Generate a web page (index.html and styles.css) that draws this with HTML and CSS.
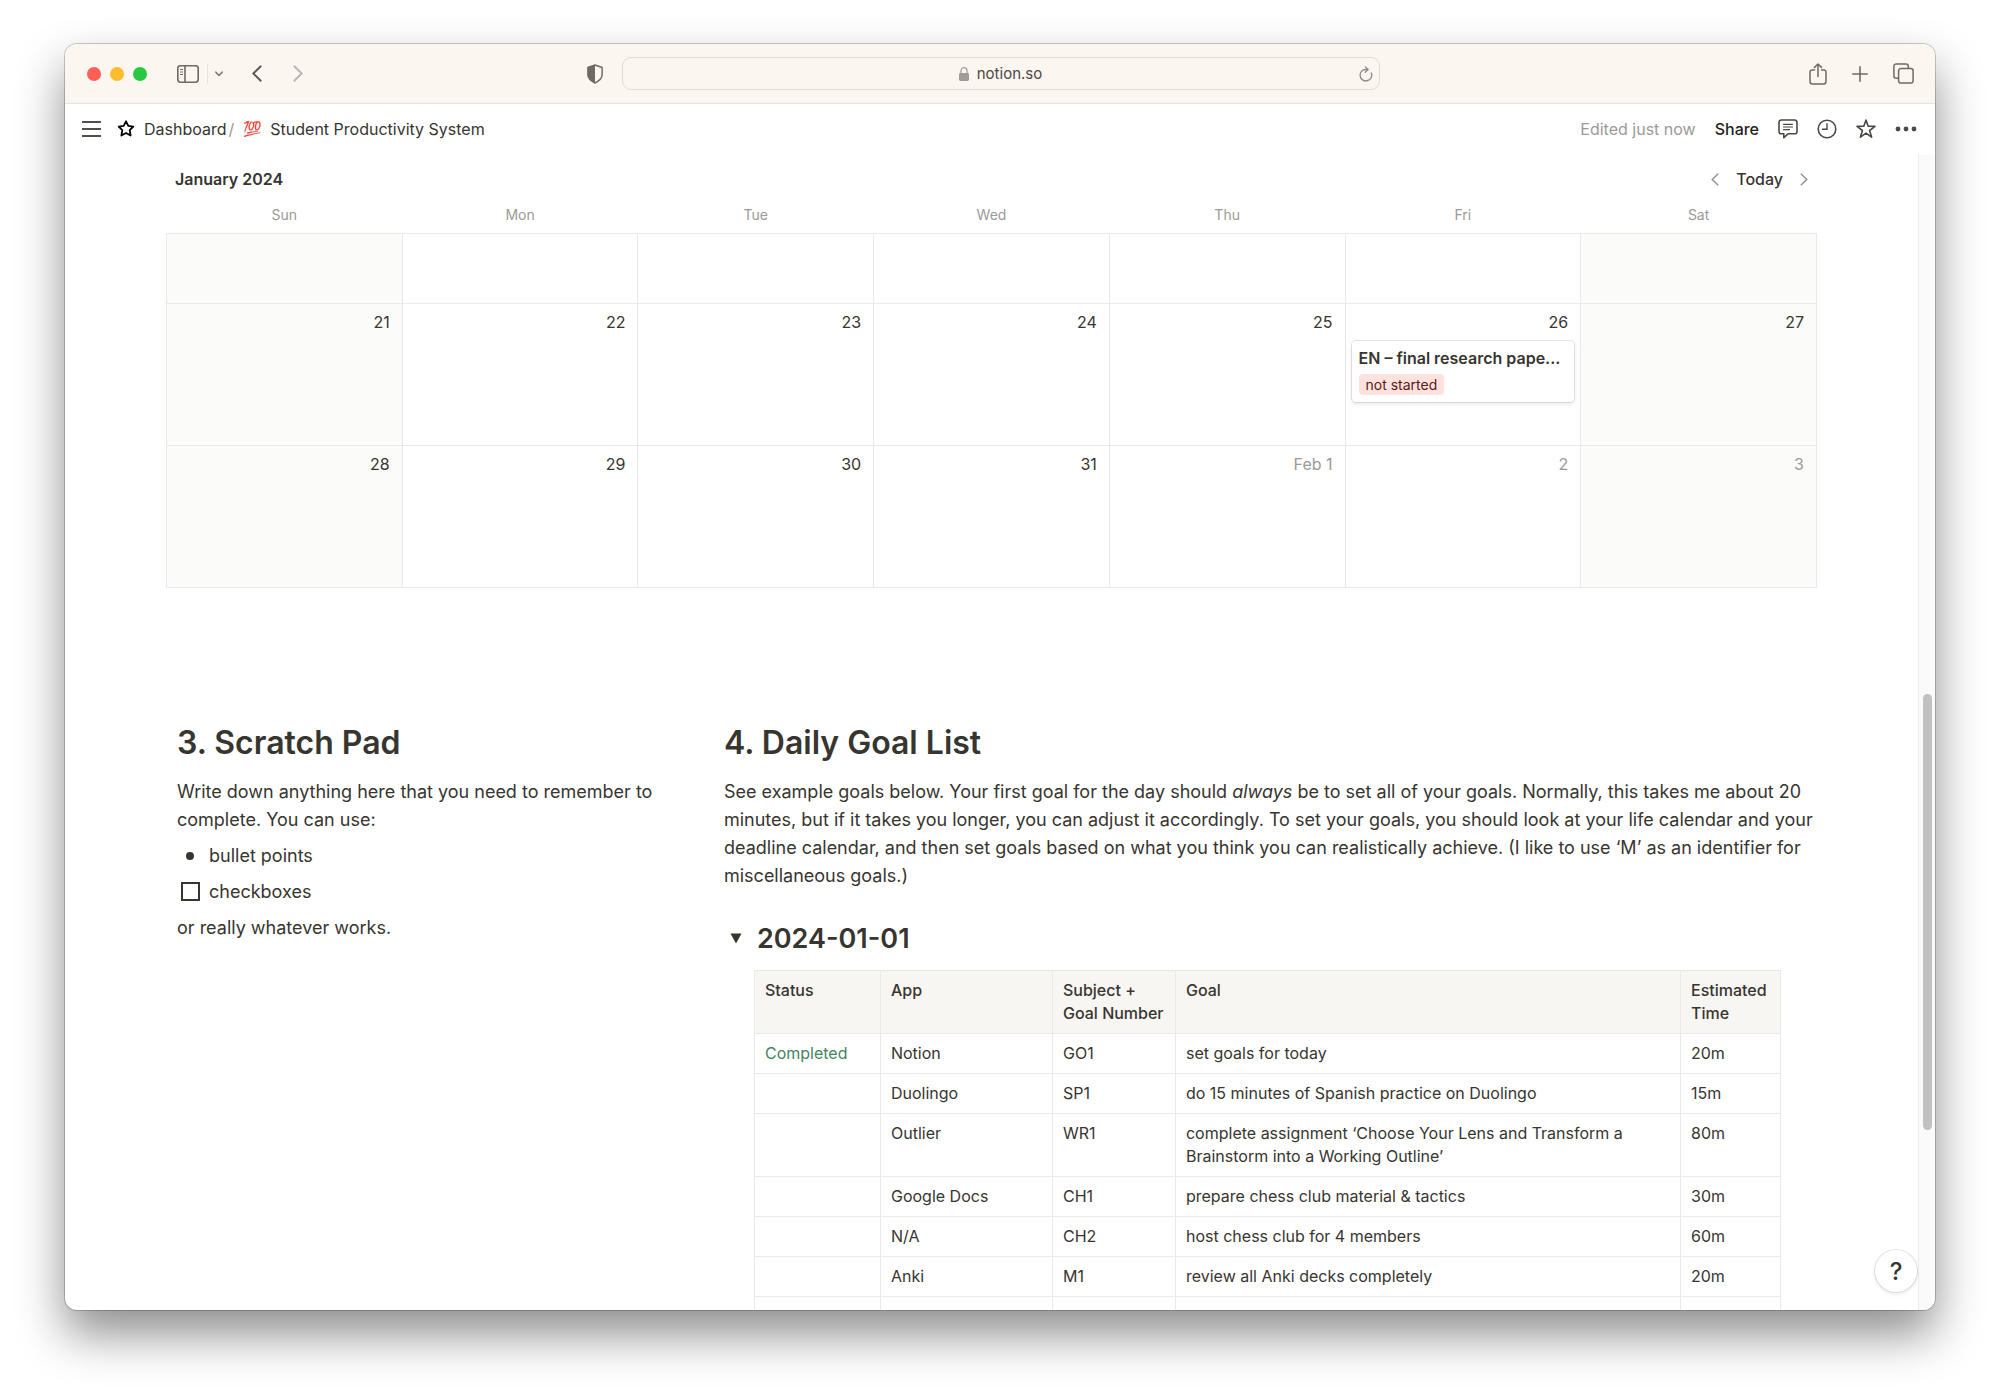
FILE: index.html
```html
<!doctype html>
<html lang="en">
<head>
<meta charset="utf-8">
<meta name="viewport" content="width=device-width,initial-scale=1">
<title>Student Productivity System</title>
<link rel="stylesheet" href="styles.css">
</head>
<body>

<div class="window">

  <!-- browser toolbar -->
  <header class="toolbar">
    <div class="tools-left">
      <div class="lights">
        <span class="light red"></span>
        <span class="light yellow"></span>
        <span class="light green"></span>
      </div>
      <button class="icon-btn sidebar-btn" aria-label="Show sidebar">
        <svg width="22" height="18" viewBox="0 0 22 18" fill="none" stroke="#6f6a64" stroke-width="1.6">
          <rect x="0.8" y="0.8" width="20.4" height="16.4" rx="2.6"/>
          <path d="M8 1v16"/>
          <path d="M3 4.5h3M3 7h3M3 9.5h3" stroke-width="1.1"/>
        </svg>
      </button>
      <span class="divider"></span>
      <button class="icon-btn" aria-label="Tab groups">
        <svg width="8" height="6" viewBox="0 0 8 6" fill="none" stroke="#7d7872" stroke-width="1.6" stroke-linecap="round" stroke-linejoin="round"><path d="M.9 1.200 4 4.500 7.100 1.200"/></svg>
      </button>
      <div class="history">
        <button class="icon-btn" aria-label="Back">
          <svg width="10" height="17" viewBox="0 0 10 17" fill="none" stroke="#5d5954" stroke-width="1.9" stroke-linecap="round" stroke-linejoin="round"><path d="M8.700 1.300 1.300 8.500l7.400 7.200"/></svg>
        </button>
        <button class="icon-btn" aria-label="Forward">
          <svg width="10" height="17" viewBox="0 0 10 17" fill="none" stroke="#b9b4af" stroke-width="1.9" stroke-linecap="round" stroke-linejoin="round"><path d="M1.300 1.300 8.700 8.500l-7.400 7.200"/></svg>
        </button>
      </div>
      <button class="icon-btn shield" aria-label="Privacy report">
        <svg width="16" height="20" viewBox="0 0 16 20">
          <path d="M8 1 15.1 3.5v7.6c0 3.2-2.6 5.6-7.1 7.9C3.500 16.700.9 14.300.9 11.100V3.500z" fill="none" stroke="#6f6a64" stroke-width="1.5" stroke-linejoin="round"/>
          <path d="M8 1v18C3.500 16.700.9 14.300.9 11.100V3.500z" fill="#6f6a64"/>
        </svg>
      </button>
    </div>

    <div class="address">
      <span class="site">
        <svg width="10" height="14" viewBox="0 0 10 14">
          <rect x="0" y="6" width="10" height="8" rx="1.4" fill="#a19c98"/>
          <path d="M2 6.500V3.700a3 3 0 0 1 6 0v2.800" fill="none" stroke="#a19c98" stroke-width="1.2"/>
        </svg>
        notion.so
      </span>
      <button class="icon-btn" aria-label="Reload">
        <svg width="14" height="16" viewBox="0 0 14 16" fill="none" stroke="#8b8681" stroke-width="1.3" stroke-linecap="round" stroke-linejoin="round">
          <path d="M12.400 7.200A5.800 5.800 0 1 1 6.800 3.300L9 3.500"/><path d="M6.300.9 9 3.500 6.300 6.200"/>
        </svg>
      </button>
    </div>

    <div class="tools-right">
      <button class="icon-btn" aria-label="Share page">
        <svg width="18" height="22" viewBox="0 0 18 22" fill="none" stroke="#6f6a64" stroke-width="1.5" stroke-linecap="round" stroke-linejoin="round">
          <path d="M5.500 7H3.200A2.200 2.200 0 0 0 1 9.200v9.600A2.200 2.200 0 0 0 3.200 21h11.600a2.200 2.200 0 0 0 2.200-2.200V9.200A2.200 2.200 0 0 0 14.800 7h-2.300"/>
          <path d="M9 13.500V1.200M5.500 4.400 9 1l3.500 3.400"/>
        </svg>
      </button>
      <button class="icon-btn" aria-label="New tab">
        <svg width="16" height="16" viewBox="0 0 16 16" stroke="#6f6a64" stroke-width="1.6" stroke-linecap="round"><path d="M8 .8v14.400M.8 8h14.400"/></svg>
      </button>
      <button class="icon-btn" aria-label="Tab overview">
        <svg width="21" height="21" viewBox="0 0 21 21" fill="none" stroke="#6f6a64" stroke-width="1.5">
          <path d="M5.600 15.300H3.200A2.300 2.300 0 0 1 .9 13V3.200A2.300 2.300 0 0 1 3.200.9H13a2.300 2.300 0 0 1 2.300 2.300v2.400"/>
          <rect x="5.600" y="5.600" width="14.500" height="14.500" rx="2.300"/>
        </svg>
      </button>
    </div>
  </header>

  <!-- page top bar -->
  <nav class="topbar">
    <button class="icon-btn menu" aria-label="Open menu">
      <svg width="19" height="16" viewBox="0 0 19 16" stroke="#504f4b" stroke-width="1.8"><path d="M0 1h19M0 8h19M0 15h19"/></svg>
    </button>
    <a href="#" class="crumb">
      <svg width="18" height="17" viewBox="0 0 18 17" fill="none" stroke="#000" stroke-width="1.8" stroke-linejoin="round"><path d="M9 1.300 11.300 5.900l5 .7-3.600 3.600.9 5.300L9 13l-4.600 2.500.9-5.300L1.700 6.600l5-.7z"/></svg>
      Dashboard
    </a>
    <span class="slash">/</span>
    <a href="#" class="crumb"><span class="emoji">💯</span>Student Productivity System</a>
    <div class="actions">
      <span class="edited">Edited just now</span>
      <button class="share">Share</button>
      <button class="icon-btn" aria-label="Comments">
        <svg width="20" height="20" viewBox="0 0 20 20" fill="none" stroke="#4a4945" stroke-width="1.600" stroke-linejoin="round" stroke-linecap="round">
          <path d="M3.300 1h13.400A2.300 2.300 0 0 1 19 3.300v9.200a2.300 2.300 0 0 1-2.300 2.300H10L5.800 18.600v-3.800H3.300A2.300 2.300 0 0 1 1 12.500V3.300A2.300 2.300 0 0 1 3.300 1z"/>
          <path d="M5.500 5.300h9M5.500 8h9M5.500 10.700h6" stroke-width="1.200"/>
        </svg>
      </button>
      <button class="icon-btn" aria-label="Updates">
        <svg width="20" height="20" viewBox="0 0 20 20" fill="none" stroke="#4a4945" stroke-width="1.600"><circle cx="10" cy="10" r="8.800"/><path d="M10 4.300v6H5" stroke-width="1.400"/></svg>
      </button>
      <button class="icon-btn" aria-label="Favorite">
        <svg width="20" height="20" viewBox="0 0 20 20" fill="none" stroke="#4a4945" stroke-width="1.600" stroke-linejoin="round"><path d="M10 1 12.200 7.300l6.800.1-5.400 4.100 2 6.700L10 14.200l-5.600 4 2-6.700L1 7.400l6.800-.1z"/></svg>
      </button>
      <button class="icon-btn" aria-label="More">
        <svg width="22" height="6" viewBox="0 0 22 6" fill="#4a4945"><circle cx="3" cy="3" r="2.400"/><circle cx="11" cy="3" r="2.400"/><circle cx="19" cy="3" r="2.400"/></svg>
      </button>
    </div>
  </nav>

  <div class="scroller">
    <main class="page">

      <div class="cal-head">
        <h1>January 2024</h1>
        <div class="cal-nav">
          <button class="icon-btn" aria-label="Previous month">
            <svg width="8" height="13" viewBox="0 0 8 13" fill="none" stroke="#91908c" stroke-width="1.400"><path d="M7.200.8 1.200 6.500l6 5.700"/></svg>
          </button>
          <button class="today">Today</button>
          <button class="icon-btn" aria-label="Next month">
            <svg width="8" height="13" viewBox="0 0 8 13" fill="none" stroke="#91908c" stroke-width="1.400"><path d="M.8.8l6 5.700-6 5.700"/></svg>
          </button>
        </div>
      </div>

      <table class="calendar">
        <thead>
          <tr><th>Sun</th><th>Mon</th><th>Tue</th><th>Wed</th><th>Thu</th><th>Fri</th><th>Sat</th></tr>
        </thead>
        <tbody>
          <tr class="cut"><td></td><td></td><td></td><td></td><td></td><td></td><td></td></tr>
          <tr>
            <td>21</td><td>22</td><td>23</td><td>24</td><td>25</td>
            <td>26
              <a href="#" class="event">
                <strong>EN – final research pape...</strong>
                <span class="tag">not started</span>
              </a>
            </td>
            <td>27</td>
          </tr>
          <tr>
            <td>28</td><td>29</td><td>30</td><td>31</td>
            <td class="next">Feb 1</td><td class="next">2</td><td class="next">3</td>
          </tr>
        </tbody>
      </table>

      <div class="columns">
        <section class="notes">
          <h2>3. Scratch Pad</h2>
          <p>Write down anything here that you need to remember to complete. You can use:</p>
          <ul><li>bullet points</li></ul>
          <label class="todo"><input type="checkbox">checkboxes</label>
          <p>or really whatever works.</p>
        </section>

        <section class="goals">
          <h2>4. Daily Goal List</h2>
          <p>See example goals below. Your first goal for the day should <em>always</em> be to set all of your goals. Normally, this takes me about 20 minutes, but if it takes you longer, you can adjust it accordingly. To set your goals, you should look at your life calendar and your deadline calendar, and then set goals based on what you think you can realistically achieve. (I like to use ‘M’ as an identifier for miscellaneous goals.)</p>

          <h3>
            <button class="icon-btn" aria-label="Collapse 2024-01-01">
              <svg width="12" height="11" viewBox="0 0 12 11" fill="#37352f"><path d="M.5.500h11L6 10.500z"/></svg>
            </button>
            2024-01-01
          </h3>

          <table class="goal-table">
            <colgroup><col class="c-status"><col class="c-app"><col class="c-subject"><col><col class="c-time"></colgroup>
            <thead>
              <tr><th>Status</th><th>App</th><th>Subject + Goal Number</th><th>Goal</th><th>Estimated Time</th></tr>
            </thead>
            <tbody>
              <tr><td class="done">Completed</td><td>Notion</td><td>GO1</td><td>set goals for today</td><td>20m</td></tr>
              <tr><td></td><td>Duolingo</td><td>SP1</td><td>do 15 minutes of Spanish practice on Duolingo</td><td>15m</td></tr>
              <tr><td></td><td>Outlier</td><td>WR1</td><td>complete assignment ‘Choose Your Lens and Transform a Brainstorm into a Working Outline’</td><td>80m</td></tr>
              <tr><td></td><td>Google Docs</td><td>CH1</td><td>prepare chess club material &amp; tactics</td><td>30m</td></tr>
              <tr><td></td><td>N/A</td><td>CH2</td><td>host chess club for 4 members</td><td>60m</td></tr>
              <tr><td></td><td>Anki</td><td>M1</td><td>review all Anki decks completely</td><td>20m</td></tr>
              <tr><td></td><td></td><td></td><td></td><td></td></tr>
            </tbody>
          </table>
        </section>
      </div>
    </main>

    <div class="track"><div class="thumb"></div></div>
    <button class="help" aria-label="Help">?</button>
  </div>
</div>

</body>
</html>
```

FILE: styles.css
```css
:root{
  --ink:#37352f; --muted:#9b9a97; --line:#e9e9e7; --weekend:#fbfbfa;
}
*{box-sizing:border-box;margin:0;padding:0}
body{
  font-family:Inter,"Liberation Sans",sans-serif;font-size:16px;color:var(--ink);
  background:#fff;height:100vh;padding:44px 65px 86px;overflow:hidden
}
button{font:inherit;color:inherit;border:none;background:none;cursor:pointer}
a{color:inherit;text-decoration:none}
svg{display:block}
.icon-btn{display:flex;align-items:center;justify-content:center;flex:none}

.window{
  height:100%;display:flex;flex-direction:column;background:#fff;
  border-radius:12px;overflow:hidden;
  box-shadow:0 0 0 1px rgba(0,0,0,.2),0 24px 48px rgba(0,0,0,.45)
}

/* === browser toolbar === */
.toolbar{
  flex:none;height:60px;padding:0 21px 0 22px;background:#fcf6f0;border-bottom:1px solid #e6e2de;
  display:grid;grid-template-columns:1fr minmax(0,758px) 1fr;align-items:center
}
.tools-left,.tools-right,.lights,.history{display:flex;align-items:center}
.lights{gap:9px}
.light{width:14px;height:14px;border-radius:50%}
.red{background:#ff5f57}
.yellow{background:#febc2e}
.green{background:#28c840}
.sidebar-btn{margin-left:30px}
.divider{width:1px;height:20px;margin:0 7px 0 8px;background:#e8e3de}
.history{gap:31px;margin-left:29px}
.shield{margin:0 19px 0 auto}
.address{
  height:33px;padding:0 6px;border:1px solid #dedad6;border-radius:9px;
  display:grid;grid-template-columns:1fr auto 1fr;align-items:center
}
.site{grid-column:2;display:flex;align-items:center;gap:8px;font-size:15px;color:#4b4845}
.address .icon-btn{justify-self:end}
.tools-right{justify-content:flex-end;gap:25px}

/* === page top bar === */
.topbar{flex:none;height:51px;padding:0 18px 2px 17px;display:flex;align-items:center}
.menu{margin-right:16px}
.crumb{display:flex;align-items:center;gap:9px;font-size:16px}
.slash{margin:0 9px 0 2px;color:var(--muted)}
.emoji{font-size:15px;width:18px;text-align:center}
.actions{margin-left:auto;display:flex;align-items:center;gap:19px}
.edited{color:var(--muted)}
.share{font-weight:500;color:#1f1e1b}

/* === scrolling area === */
.scroller{flex:1;min-height:0;display:flex;position:relative}
.page{flex:1;min-width:0;padding:0 101px;overflow:hidden}
.track{flex:none;width:17px;background:#fafafa;border-left:1px solid #ececec;padding:0 4px}
.thumb{width:9px;height:436px;margin-top:539px;border-radius:5px;background:#c1c1c1}
.help{
  position:absolute;right:18px;bottom:18px;width:42px;height:42px;border-radius:50%;
  background:#fff;font-size:24px;font-weight:500;
  box-shadow:0 0 0 1px rgba(15,15,15,.1),0 2px 4px rgba(15,15,15,.1)
}

/* === calendar === */
.cal-head{display:flex;align-items:center;justify-content:space-between;height:48px;padding:0 9px 0 9px}
.cal-head h1{font-size:16px;font-weight:600}
.cal-nav{display:flex;align-items:center;gap:17px}
.today{font-weight:500}
.calendar{width:100%;table-layout:fixed;border-collapse:collapse}
.calendar th{height:30px;padding-bottom:6px;font-size:14px;font-weight:400;color:var(--muted)}
.calendar td{
  height:142px;padding:7px 12px 0 5px;border:1px solid var(--line);
  line-height:22px;text-align:right;vertical-align:top
}
.calendar .cut td{height:70px}
.calendar td:first-child,.calendar td:last-child{background:var(--weekend)}
.calendar .next{color:var(--muted)}
.event{
  display:block;margin:8px -6px 0 1px;padding:6px 7px 7px;border-radius:4px;background:#fff;text-align:left;
  box-shadow:0 0 0 1px rgba(15,15,15,.1),0 2px 4px rgba(15,15,15,.1)
}
.event strong{display:block;font-size:16px;font-weight:600;white-space:nowrap}
.tag{
  display:block;width:fit-content;margin-top:5px;padding:0 7px;border-radius:4px;
  background:#ffe2dd;color:#5d1715;font-size:14px;line-height:21px
}

/* === two columns under the calendar === */
.columns{
  display:grid;grid-template-columns:minmax(0,21fr) minmax(0,46fr);gap:53px;
  margin-top:133px;padding:0 11px;font-size:18px;line-height:28px
}
.columns h2{font-size:32px;font-weight:600;line-height:44px;margin-bottom:13px}
.notes p,.notes ul,.todo{margin-top:8px}
.notes ul{list-style:none}
.notes li,.todo{display:flex;align-items:center}
.notes li::before{content:"";width:8px;height:8px;margin:0 15px 0 9px;border-radius:50%;background:var(--ink)}
.todo input{
  appearance:none;width:19px;height:19px;margin:0 9px 0 4px;border:2px solid var(--ink);background:#fff
}
.goals p{margin-right:-16px}
.goals h3{
  display:flex;align-items:center;gap:15px;margin-top:31px;padding-left:6px;
  font-size:27px;font-weight:600;line-height:36px
}

.goal-table{
  width:calc(100% - 55px);margin:13px 0 0 30px;table-layout:fixed;border-collapse:collapse;
  font-size:16px;line-height:23px
}
.goal-table th,.goal-table td{
  padding:8px 10px;border:1px solid var(--line);text-align:left;vertical-align:top;font-weight:400
}
.goal-table th{background:#f7f6f3;font-weight:500}
.goal-table tr{height:40px}
.goal-table .done{color:#448361}
.c-status{width:126px}
.c-app{width:172px}
.c-subject{width:123px}
.c-time{width:100px}
```
